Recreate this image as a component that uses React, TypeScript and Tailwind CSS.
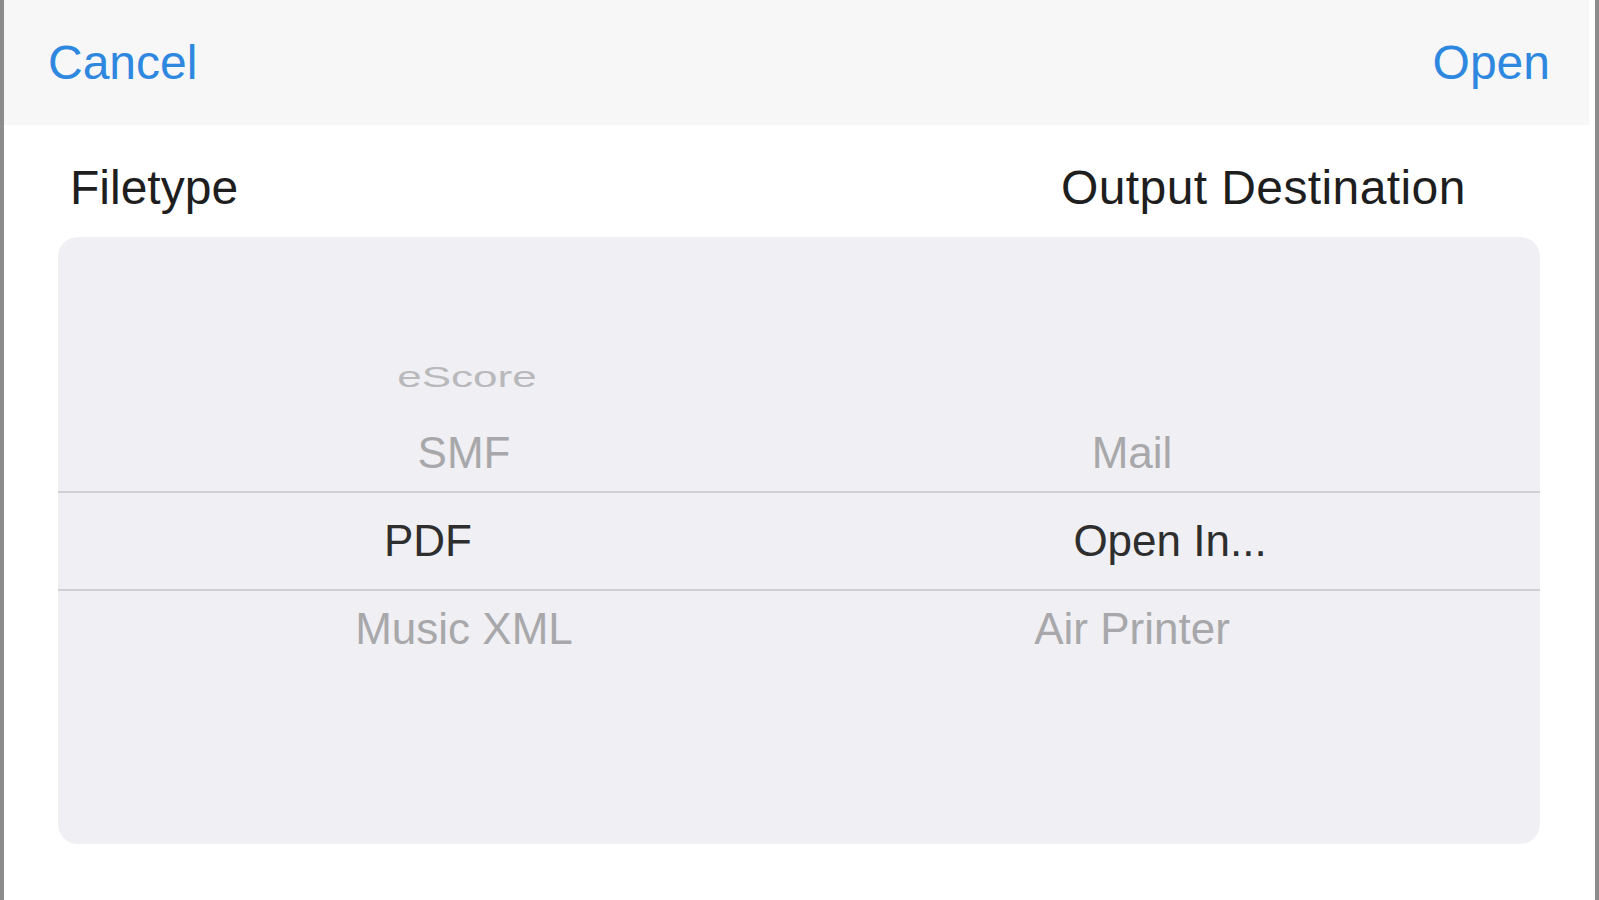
import React from "react";

export default function App() {
  return (
    <div
      className="w-[1599px] h-[900px] bg-white flex flex-col border-l-4 border-r-4 border-[#8c8c8c] overflow-hidden"
      style={{ fontFamily: '"Liberation Sans", Arial, sans-serif' }}
    >
      {/* Header */}
      <div className="h-[125px] mr-[6px] bg-[#f7f7f7] flex items-center justify-between pl-[44px] pr-[39px]">
        <span className="text-[48px] leading-none text-[#2f88e0]">Cancel</span>
        <span className="text-[48px] leading-none text-[#2f88e0]">Open</span>
      </div>

      {/* Labels */}
      <div className="h-[112px] pt-[14px] flex items-center">
        <span className="ml-[66px] w-[991px] text-[48px] leading-none text-[#1e1e1e]">Filetype</span>
        <span className="text-[48px] leading-none tracking-[0.4px] text-[#1e1e1e]">Output Destination</span>
      </div>

      {/* Picker */}
      <div className="ml-[54px] w-[1482px] h-[607px] rounded-[20px] bg-[#efeff4] flex flex-col overflow-hidden">
        <div className="h-[254px] flex">
          <div className="w-[812px] flex flex-col justify-end">
            <div className="h-[76px] flex items-center justify-center pl-[6px]">
              <span className="text-[44px] leading-none text-[#b9b9bc] scale-y-[0.68] inline-block">eScore</span>
            </div>
            <div className="h-[76px] flex items-center justify-center">
              <span className="text-[44px] leading-none text-[#a8a8ab]">SMF</span>
            </div>
          </div>
          <div className="w-[524px] flex flex-col justify-end">
            <div className="h-[76px] flex items-center justify-center">
              <span className="text-[44px] leading-none text-[#a8a8ab]">Mail</span>
            </div>
          </div>
        </div>
        <div className="h-[2px] bg-[#cfcfd4]" />
        <div className="h-[96px] flex">
          <div className="w-[812px] flex items-center justify-center pr-[72px]">
            <span className="text-[44px] leading-none text-[#2e2e2e]">PDF</span>
          </div>
          <div className="w-[524px] flex items-center justify-center pl-[76px]">
            <span className="text-[44px] leading-none text-[#2e2e2e]">Open In...</span>
          </div>
        </div>
        <div className="h-[2px] bg-[#cfcfd4]" />
        <div className="h-[76px] flex">
          <div className="w-[812px] flex items-center justify-center">
            <span className="text-[44px] leading-none text-[#a8a8ab]">Music XML</span>
          </div>
          <div className="w-[524px] flex items-center justify-center">
            <span className="text-[44px] leading-none text-[#a8a8ab]">Air Printer</span>
          </div>
        </div>
      </div>
    </div>
  );
}
